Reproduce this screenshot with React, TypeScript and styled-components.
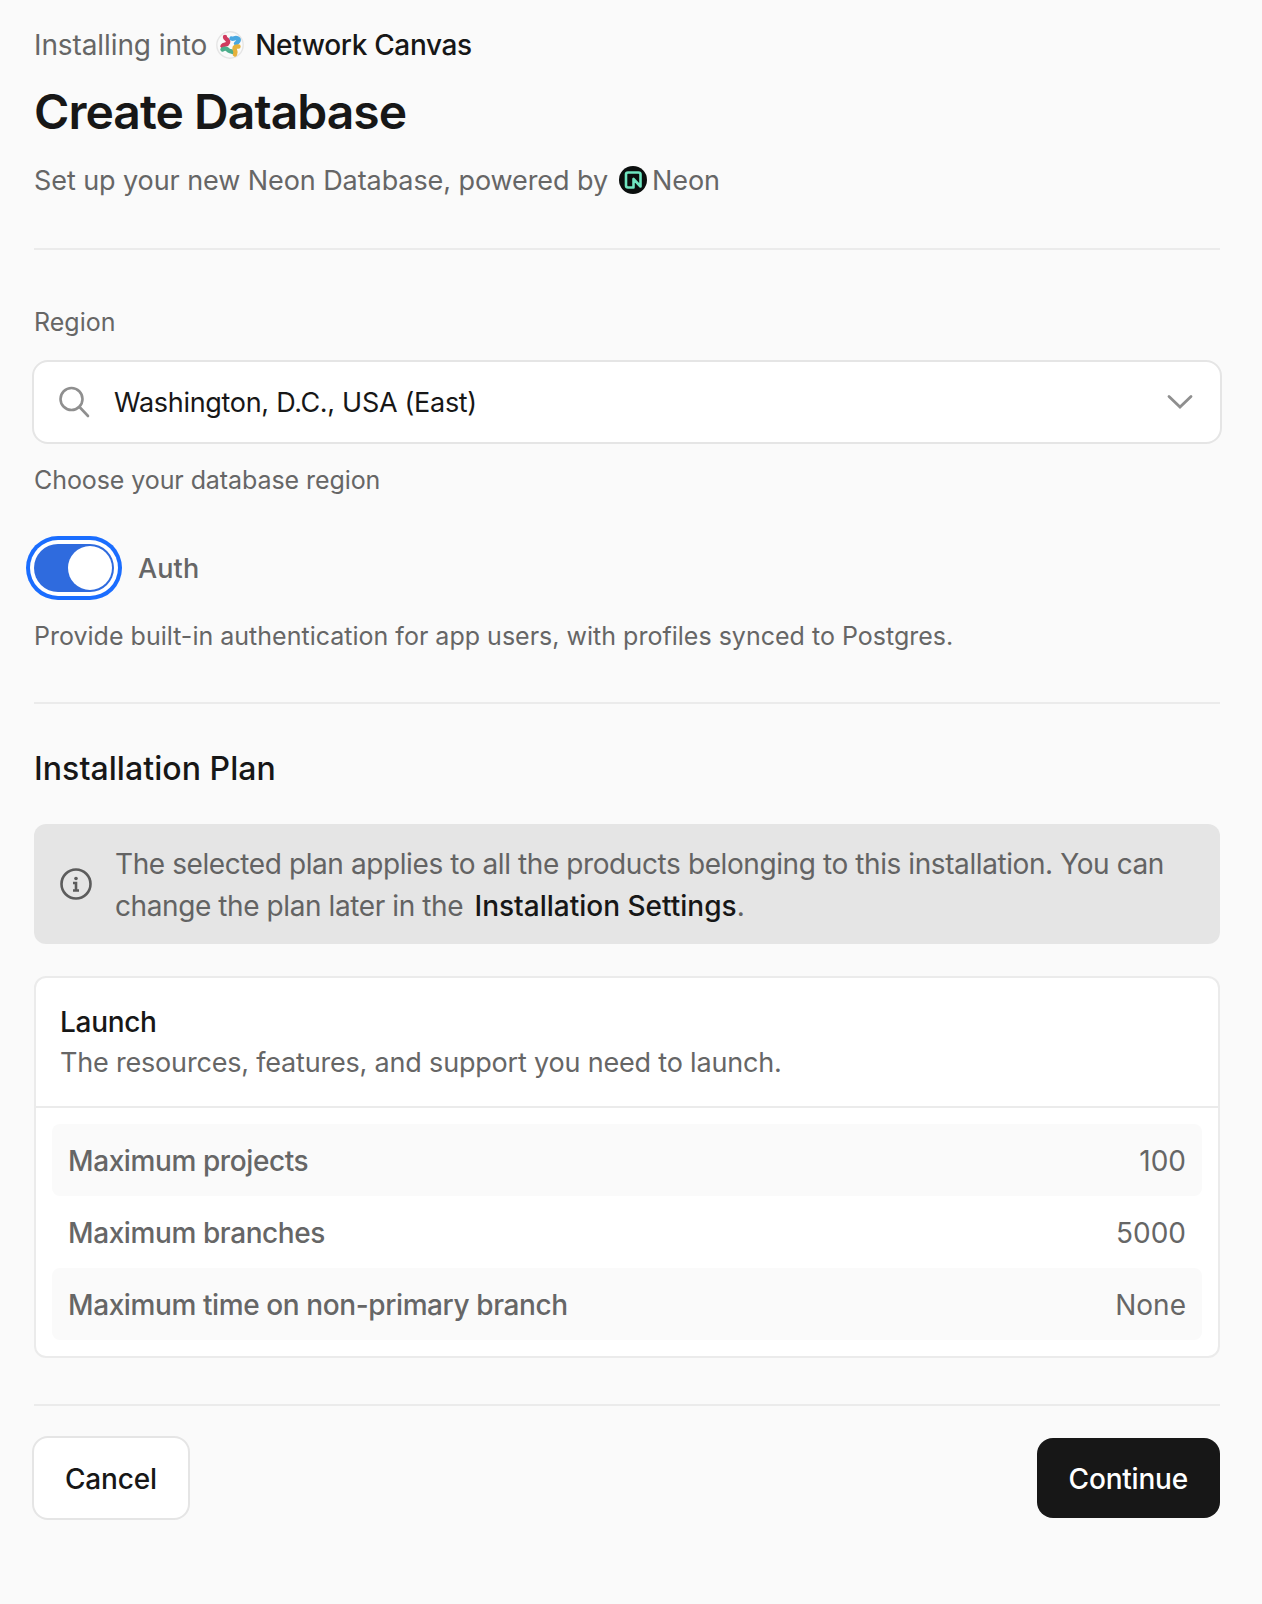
import React from "react"
import styled, { createGlobalStyle } from "styled-components"

const GlobalStyle = createGlobalStyle`
  html, body {
    margin: 0;
    padding: 0;
    background: #fafafa;
  }
  body {
    font-family: "Inter", "Liberation Sans", sans-serif;
    color: #171717;
  }
`

const Page = styled.main`
  box-sizing: border-box;
  height: 1604px;
  padding: 25px 42px 0 34px;
`

const Crumb = styled.div`
  display: flex;
  align-items: center;
  height: 40px;
  font-size: 28px;
  letter-spacing: -0.1px;
  color: #666;
`

const CrumbName = styled.span`
  color: #171717;
  font-weight: 500;
  letter-spacing: -0.35px;
`

const CrumbLogo = styled.svg`
  width: 28px;
  height: 28px;
  margin: 0 11px 0 9px;
`

const Title = styled.h1`
  margin: 19px 0 0;
  font-size: 48px;
  line-height: 56px;
  font-weight: 600;
  letter-spacing: -0.95px;
  color: #171717;
`

const Subtitle = styled.p`
  display: flex;
  align-items: center;
  margin: 20px 0 0;
  height: 40px;
  font-size: 27px;
  letter-spacing: -0.08px;
  color: #666;
`

const NeonLogo = styled.svg`
  width: 28px;
  height: 28px;
  margin: 0 5px 0 11px;
`

const Divider = styled.hr<{ $top: number }>`
  border: 0;
  height: 2px;
  background: #ebebeb;
  margin: ${(p) => p.$top}px 0 0;
`

const FieldLabel = styled.div`
  margin-top: 54px;
  font-size: 25px;
  line-height: 36px;
  color: #666;
`

const Select = styled.div`
  box-sizing: border-box;
  display: flex;
  align-items: center;
  height: 84px;
  margin: 20px -2px 0 -2px;
  padding: 0 27px 0 24px;
  background: #fff;
  border: 2px solid #e5e5e5;
  border-radius: 16px;
`

const SelectValue = styled.span`
  flex: 1;
  margin-left: 24px;
  font-size: 27px;
  letter-spacing: -0.3px;
  color: #171717;
`

const Hint = styled.p<{ $top: number; $tight?: boolean }>`
  margin: ${(p) => p.$top}px 0 0;
  font-size: 25px;
  line-height: 36px;
  letter-spacing: ${(p) => (p.$tight ? "-0.08px" : "0.01px")};
  color: #666;
`

const ToggleRow = styled.div`
  display: flex;
  align-items: center;
  gap: 24px;
  margin-top: 46px;
`

const ToggleTrack = styled.div`
  box-sizing: border-box;
  display: flex;
  justify-content: flex-end;
  align-items: center;
  width: 80px;
  height: 48px;
  padding: 2px;
  border-radius: 24px;
  background: #2f6bde;
  box-shadow: 0 0 0 4px #fff, 0 0 0 8px #1a6dff;
`

const ToggleThumb = styled.div`
  width: 44px;
  height: 44px;
  border-radius: 50%;
  background: #fff;
`

const ToggleLabel = styled.span`
  font-size: 27px;
  font-weight: 500;
  letter-spacing: 0.1px;
  color: #666;
`

const SectionTitle = styled.h2`
  margin: 45px 0 0;
  font-size: 32px;
  line-height: 40px;
  font-weight: 500;
  letter-spacing: 0.06px;
  color: #171717;
`

const Notice = styled.div`
  box-sizing: border-box;
  display: flex;
  align-items: center;
  gap: 23px;
  margin-top: 35px;
  padding: 19px 24px 17px 26px;
  background: #e5e5e5;
  border-radius: 12px;
`

const NoticeText = styled.p`
  margin: 0;
  font-size: 28px;
  line-height: 42px;
  letter-spacing: -0.41px;
  color: #636363;
`

const NoticeLink = styled.span`
  margin-left: 4px;
  color: #171717;
  font-weight: 500;
  letter-spacing: 0;
`

const NoticeIcon = styled.svg`
  flex: none;
  width: 32px;
  height: 32px;
  margin-top: -2px;
`

const Card = styled.section`
  margin-top: 32px;
  background: #fff;
  border: 2px solid #ebebeb;
  border-radius: 12px;
`

const CardHeader = styled.header`
  padding: 24px 24px 23px;
  border-bottom: 2px solid #ebebeb;
`

const CardTitle = styled.div`
  font-size: 28px;
  line-height: 40px;
  font-weight: 500;
  letter-spacing: -0.3px;
  color: #171717;
`

const CardText = styled.div`
  margin-top: 1px;
  font-size: 27px;
  line-height: 40px;
  letter-spacing: -0.19px;
  color: #666;
`

const CardBody = styled.div`
  padding: 16px;
`

const Row = styled.div<{ $shaded?: boolean }>`
  display: flex;
  justify-content: space-between;
  align-items: center;
  box-sizing: border-box;
  height: 72px;
  padding: 1px 16px 0;
  border-radius: 8px;
  background: ${(p) => (p.$shaded ? "#fafafa" : "transparent")};
  font-size: 28px;
  color: #666;
`

const RowLabel = styled.span`
  font-weight: 500;
  letter-spacing: -0.4px;
`

const Footer = styled.footer`
  display: flex;
  justify-content: space-between;
  align-items: center;
  margin-top: 30px;
`

const Button = styled.button<{ $primary?: boolean }>`
  box-sizing: border-box;
  height: ${(p) => (p.$primary ? 80 : 84)}px;
  padding: 2px ${(p) => (p.$primary ? 32 : 31)}px 0;
  margin-left: ${(p) => (p.$primary ? 0 : -2)}px;
  font-family: inherit;
  font-size: 28px;
  font-weight: 500;
  letter-spacing: -0.2px;
  border-radius: 16px;
  color: ${(p) => (p.$primary ? "#fff" : "#171717")};
  background: ${(p) => (p.$primary ? "#171717" : "#fff")};
  border: ${(p) => (p.$primary ? "none" : "2px solid #e5e5e5")};
`

const NetworkCanvasLogo = () => (
  <CrumbLogo viewBox="0 0 28 28" fill="none" strokeWidth="4.4" strokeLinecap="round" strokeLinejoin="round">
    <circle cx="14" cy="14" r="13.2" fill="#fafafa" stroke="#e5e5e5" strokeWidth="1.4" />
    <path d="M9 6c0 2.500 4 2.500 3 5.500s-4 1.500-5.500 3.500" stroke="#d03a5f" />
    <path d="M15.500 7.500c2.500 1 3.500-1.500 6 0s.5 3.500-1.500 5" stroke="#4aa8e0" />
    <path d="M6.500 18.500c2-1.500 4.500-1 5.500.5s3.500 1 4.500 2" stroke="#4cae8c" />
    <path d="M22.500 15.500c-2 0-4 0-4 2s2 2.500.5 6" stroke="#e6b23c" />
  </CrumbLogo>
)

const NeonMark = () => (
  <NeonLogo viewBox="0 0 28 28" fill="none">
    <circle cx="14" cy="14" r="14" fill="#0b0f0e" />
    <path
      d="M7 8.500A2 2 0 0 1 9 6.500H19.500A2 2 0 0 1 21.500 8.500V20.500L14.500 13V21.500H9A2 2 0 0 1 7 19.500Z"
      stroke="#6fe6c0"
      strokeWidth="2.6"
      strokeLinejoin="round"
    />
  </NeonLogo>
)

const SearchIcon = () => (
  <svg width="32" height="32" viewBox="0 0 32 32" fill="none" stroke="#8f8f8f" strokeWidth="2.6">
    <circle cx="13.500" cy="13" r="11" />
    <path d="M21.500 21 30 30" strokeLinecap="round" />
  </svg>
)

const ChevronIcon = () => (
  <svg width="26" height="16" viewBox="0 0 26 16" fill="none" stroke="#8f8f8f" strokeWidth="2.8">
    <path d="M2 2.500 13 13 24 2.500" strokeLinecap="round" />
  </svg>
)

const InfoIcon = () => (
  <NoticeIcon viewBox="0 0 32 32" fill="none" stroke="#5c5c5c" strokeWidth="2.6">
    <circle cx="16" cy="16" r="14.500" />
    <circle cx="16" cy="10.500" r="1.800" fill="#5c5c5c" stroke="none" />
    <path d="M13 15h3v7.500M13 22.500h6" />
  </NoticeIcon>
)

const App = () => {
  return (
    <>
      <GlobalStyle />
      <Page>
        <Crumb>
          Installing into
          <NetworkCanvasLogo />
          <CrumbName>Network Canvas</CrumbName>
        </Crumb>
        <Title>Create Database</Title>
        <Subtitle>
          Set up your new Neon Database, powered by
          <NeonMark />
          Neon
        </Subtitle>
        <Divider $top={48} />

        <FieldLabel>Region</FieldLabel>
        <Select>
          <SearchIcon />
          <SelectValue>Washington, D.C., USA (East)</SelectValue>
          <ChevronIcon />
        </Select>
        <Hint $top={18} $tight>Choose your database region</Hint>

        <ToggleRow>
          <ToggleTrack>
            <ToggleThumb />
          </ToggleTrack>
          <ToggleLabel>Auth</ToggleLabel>
        </ToggleRow>
        <Hint $top={26}>Provide built-in authentication for app users, with profiles synced to Postgres.</Hint>
        <Divider $top={48} />

        <SectionTitle>Installation Plan</SectionTitle>
        <Notice>
          <InfoIcon />
          <NoticeText>
            The selected plan applies to all the products belonging to this installation. You can change the plan later
            in the<NoticeLink> Installation Settings</NoticeLink>.
          </NoticeText>
        </Notice>

        <Card>
          <CardHeader>
            <CardTitle>Launch</CardTitle>
            <CardText>The resources, features, and support you need to launch.</CardText>
          </CardHeader>
          <CardBody>
            <Row $shaded>
              <RowLabel>Maximum projects</RowLabel>
              <span>100</span>
            </Row>
            <Row>
              <RowLabel>Maximum branches</RowLabel>
              <span>5000</span>
            </Row>
            <Row $shaded>
              <RowLabel>Maximum time on non-primary branch</RowLabel>
              <span>None</span>
            </Row>
          </CardBody>
        </Card>

        <Divider $top={46} />
        <Footer>
          <Button>Cancel</Button>
          <Button $primary>Continue</Button>
        </Footer>
      </Page>
    </>
  )
}

export default App
